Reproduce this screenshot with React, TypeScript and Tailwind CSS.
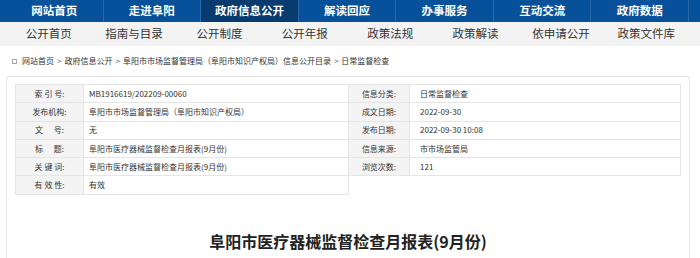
const topNav = ['网站首页', '走进阜阳', '政府信息公开', '解读回应', '办事服务', '互动交流', '政府数据']
const subNav = ['公开首页', '指南与目录', '公开制度', '公开年报', '政策法规', '政策解读', '依申请公开', '政策文件库']

const leftRows = [
  ['索 引 号:', 'MB1916619/202209-00060'],
  ['发布机构:', '阜阳市市场监督管理局（阜阳市知识产权局）'],
  ['文\u00a0\u00a0\u00a0\u00a0\u00a0\u00a0号:', '无'],
  ['标\u00a0\u00a0\u00a0\u00a0\u00a0\u00a0题:', '阜阳市医疗器械监督检查月报表(9月份)'],
  ['关 键 词:', '阜阳市医疗器械监督检查月报表(9月份)'],
  ['有 效 性:', '有效'],
]

const rightRows = [
  ['信息分类:', '日常监督检查'],
  ['成文日期:', '2022-09-30'],
  ['发布日期:', '2022-09-30 10:08'],
  ['信息来源:', '市市场监管局'],
  ['浏览次数:', '121'],
]

export default function App() {
  return (
    <main
      className="h-[258px] overflow-hidden bg-white text-[#333]"
      style={{ fontFamily: '"Noto Sans CJK SC", "Microsoft YaHei", sans-serif' }}
    >
      {/* TOP NAV */}
      <nav className="h-[22px] bg-[#07519a]">
        <div className="ml-[6px] flex h-full w-[683px]">
          {topNav.map((t) => (
            <a
              key={t}
              className={`flex h-full flex-1 items-center justify-center border-r border-[#2b6aa8] text-[11.5px] font-bold text-white ${
                t === '政府信息公开' ? 'bg-[#083c70]' : ''
              }`}
            >
              {t}
            </a>
          ))}
        </div>
      </nav>

      {/* SUB NAV */}
      <div className="h-[24px] bg-[#f3f3f3]">
        <div className="ml-[6px] flex h-full w-[683px]">
          {subNav.map((t) => (
            <a key={t} className="flex h-full flex-1 items-center justify-center text-[11.5px] text-[#333]">
              {t}
            </a>
          ))}
        </div>
      </div>

      {/* BREADCRUMB */}
      <div className="flex h-[30px] items-center pl-[12px] text-[8px] text-[#333]">
        <span className="mr-[5px] flex h-[5px] w-[5px] items-center justify-center border border-[#aaa] text-[5px] leading-none text-[#999]">
          ›
        </span>
        <span>网站首页</span>
        <span className="mx-[3px] text-[#555]">&gt;</span>
        <span>政府信息公开</span>
        <span className="mx-[3px] text-[#555]">&gt;</span>
        <span>阜阳市市场监督管理局（阜阳市知识产权局）信息公开目录</span>
        <span className="mx-[3px] text-[#555]">&gt;</span>
        <span>日常监督检查</span>
      </div>

      {/* CARD */}
      <div className="ml-[6px] w-[684px] rounded-t-[4px] border border-b-0 border-[#e3e3e3] px-[8px] pt-[7px] pb-[30px]">
        <div className="flex items-start text-[8px] text-[#333]">
          <table className="w-[334px] border-collapse">
            <tbody>
              {leftRows.map(([k, v]) => (
                <tr key={k} className="h-[18.3px]">
                  <td className="w-[68px] border border-[#e5e5e5] bg-[#f4f4f4] text-center">{k}</td>
                  <td className="border border-[#e5e5e5] pl-[5px]">{v}</td>
                </tr>
              ))}
            </tbody>
          </table>
          <table className="-ml-px w-[333px] border-collapse">
            <tbody>
              {rightRows.map(([k, v]) => (
                <tr key={k} className="h-[18.3px]">
                  <td className="w-[61px] border border-[#e5e5e5] bg-[#f4f4f4] text-center">{k}</td>
                  <td className="border border-[#e5e5e5] pl-[10px]">{v}</td>
                </tr>
              ))}
            </tbody>
          </table>
        </div>

        <h1 className="mt-[34px] text-center text-[16px] font-bold text-[#222]">
          阜阳市医疗器械监督检查月报表(9月份)
        </h1>
      </div>
    </main>
  )
}
